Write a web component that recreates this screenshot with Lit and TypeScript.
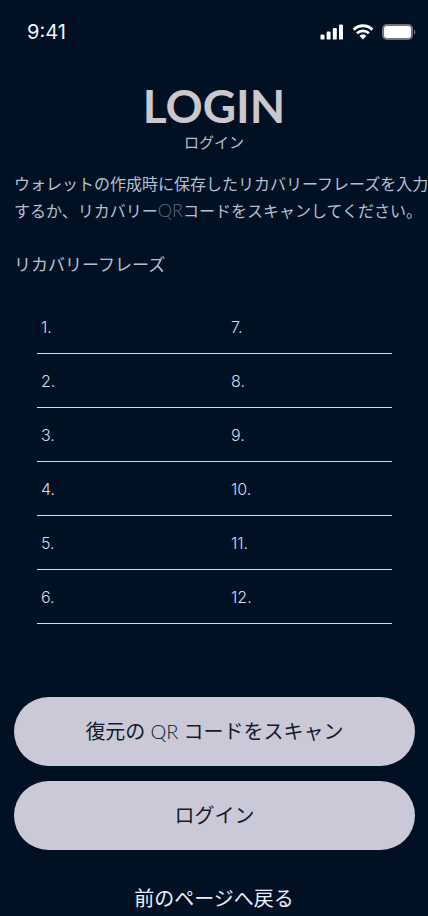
import { LitElement, html, css } from "lit";
import { customElement } from "lit/decorators.js";

@customElement("status-bar")
class StatusBar extends LitElement {
  static styles = css`
    :host {
      display: flex;
      justify-content: space-between;
      align-items: center;
      height: 32px;
      padding: 16px 12px 0 27px;
    }
    .time {
      font-family: Inter, sans-serif;
      font-size: 20px;
      line-height: 32px;
      color: #f1f5fc;
    }
    .icons {
      display: flex;
      align-items: center;
      gap: 8px;
    }
    svg {
      display: block;
    }
  `;

  render() {
    return html`
      <span class="time">9:41</span>
      <div class="icons">
        <svg width="24" height="16" viewBox="0 0 24 16" fill="#fff" aria-hidden="true">
          <rect x="0.5" y="10.4" width="4" height="5.2" rx="1.2" />
          <rect x="6.6" y="7.6" width="4" height="8" rx="1.2" />
          <rect x="12.8" y="4" width="4" height="11.6" rx="1.2" />
          <rect x="19" y="0.4" width="4" height="15.2" rx="1.2" />
        </svg>
        <svg width="22" height="16" viewBox="0 0 22 16" fill="none" stroke="#fff" aria-hidden="true">
          <path d="M1.6 5.6C6.9.5 15.1.5 20.4 5.6" stroke-width="2.9" />
          <path d="M5 9.3c3.4-3.2 8.6-3.2 12 0" stroke-width="2.8" />
          <path d="M11 10.6c1.3 0 2.5.5 3.4 1.3L11 15.6l-3.4-3.7c.9-.8 2.1-1.3 3.4-1.3z" fill="#fff" stroke="none" />
        </svg>
        <svg width="34" height="18" viewBox="0 0 34 18" aria-hidden="true">
          <rect x="0" y="1" width="31" height="16" rx="4.8" fill="#6d7482" />
          <rect x="2" y="3" width="27" height="12" rx="3" fill="#fff" />
          <path d="M32 6.4c1.8.8 1.8 4.4 0 5.2z" fill="#6d7482" />
        </svg>
      </div>
    `;
  }
}

@customElement("phrase-grid")
class PhraseGrid extends LitElement {
  static styles = css`
    :host {
      display: block;
    }
    .row {
      display: grid;
      grid-template-columns: 190px 1fr;
      height: 53px;
      border-bottom: 1px solid #d3deec;
    }
    .cell {
      display: flex;
      align-items: center;
      padding-left: 4px;
      font-family: Inter, sans-serif;
      font-size: 16px;
      font-weight: 300;
      line-height: 24px;
      color: #d3dbe9;
    }
    input {
      flex: 1;
      min-width: 0;
      margin: 0 8px;
      padding: 0;
      border: 0;
      background: none;
      font: inherit;
      color: inherit;
    }
  `;

  private field(n: number) {
    return html`
      <div class="cell">
        <label for="word-${n}">${n}.</label>
        <input id="word-${n}" type="text" autocomplete="off" />
      </div>
    `;
  }

  render() {
    return [1, 2, 3, 4, 5, 6].map(
      (n) => html`<div class="row">${this.field(n)}${this.field(n + 6)}</div>`
    );
  }
}

@customElement("app-root")
class AppRoot extends LitElement {
  static styles = css`
    :host {
      display: block;
      min-height: 100vh;
      overflow: hidden;
      background: #001124;
      font-family: Lato, "Noto Sans CJK JP", sans-serif;
      color: #b4c0d0;
    }
    header {
      margin-top: 30px;
      text-align: center;
    }
    h1 {
      margin: 0;
      font-size: 46px;
      line-height: 56px;
      font-weight: 700;
      color: #cbc7cd;
    }
    .subtitle {
      margin: 0;
      font-size: 15px;
      line-height: 16px;
    }
    .lead {
      margin: 20px 0 0 14px;
      font-size: 16px;
      line-height: 27px;
      white-space: nowrap;
    }
    .thin {
      font-size: 18px;
      line-height: 1;
      font-weight: 300;
      color: #5c6a80;
    }
    h2 {
      margin: 27px 14px 0;
      font-size: 17px;
      line-height: 28px;
      font-weight: 400;
    }
    phrase-grid {
      margin: 21px 36px 0 37px;
    }
    .actions {
      display: flex;
      flex-direction: column;
      gap: 15px;
      margin: 73px 13px 0 14px;
    }
    button {
      height: 69px;
      padding: 0 0 2px;
      border: 0;
      border-radius: 35px;
      background: #cbc9d7;
      font-family: inherit;
      font-size: 20px;
      color: #101b2b;
    }
    .qr {
      line-height: 1;
      font-weight: 300;
    }
    .back {
      display: block;
      width: fit-content;
      margin: 32px auto 0;
      font-size: 20px;
      line-height: 32px;
      color: #e8effa;
      text-decoration: none;
    }
  `;

  render() {
    return html`
      <status-bar></status-bar>
      <main>
        <header>
          <h1>LOGIN</h1>
          <p class="subtitle">ログイン</p>
        </header>
        <p class="lead">
          ウォレットの作成時に保存したリカバリーフレーズを入力<br />するか、リカバリー<span class="thin">QR</span>コードをスキャンしてください。
        </p>
        <h2>リカバリーフレーズ</h2>
        <phrase-grid></phrase-grid>
        <div class="actions">
          <button type="button">復元の <span class="qr">QR</span> コードをスキャン</button>
          <button type="button">ログイン</button>
        </div>
        <a class="back" href="#">前のページへ戻る</a>
      </main>
    `;
  }
}
